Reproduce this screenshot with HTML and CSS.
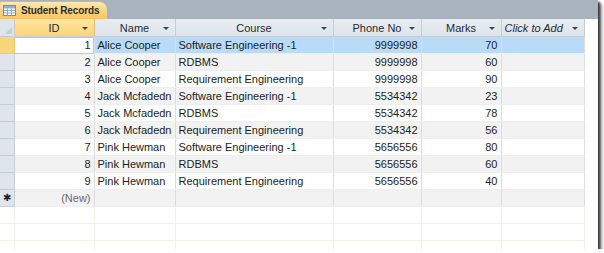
FILE: index.html
```html
<!DOCTYPE html>
<html lang="en">
<head>
    <meta charset="UTF-8">
    <title>Student Records</title>
    <link rel="stylesheet" href="styles.css">
</head>
<body>

<div class="window">
    <!-- Object tab -->
    <div class="tabbar">
        <div class="tab">
            <svg class="tab-icon" width="13" height="11" viewBox="0 0 13 11">
                <rect x="0.5" y="0.5" width="12" height="10" fill="#ffffff" stroke="#6d8fb8"/>
                <rect x="1" y="1" width="11" height="2.5" fill="#8fb0d8"/>
                <path d="M1 5.5H12M1 8H12M4.5 3.5V10.5M8.5 3.5V10.5" stroke="#8fa9c9" stroke-width="1"/>
            </svg>
            <span>Student Records</span>
        </div>
    </div>

    <!-- Datasheet -->
    <div class="sheet">
        <table class="grid">
            <colgroup>
                <col class="c-sel">
                <col class="c-id">
                <col class="c-name">
                <col class="c-course">
                <col class="c-phone">
                <col class="c-marks">
                <col class="c-add">
                <col class="c-rest">
            </colgroup>
            <thead>
                <tr>
                    <th class="corner"><span class="corner-mark"></span></th>
                    <th class="head head-active">ID<i class="arrow"></i></th>
                    <th class="head">Name<i class="arrow"></i></th>
                    <th class="head">Course<i class="arrow"></i></th>
                    <th class="head">Phone No<i class="arrow"></i></th>
                    <th class="head">Marks<i class="arrow"></i></th>
                    <th class="head head-add">Click to Add<i class="arrow"></i></th>
                    <th class="rest"></th>
                </tr>
            </thead>
            <tbody>
                <tr class="row current">
                    <td class="sel sel-active"></td>
                    <td class="num cell-focus">1</td>
                    <td>Alice Cooper</td>
                    <td>Software Engineering -1</td>
                    <td class="num">9999998</td>
                    <td class="num">70</td>
                    <td></td>
                    <td class="rest"></td>
                </tr>
                <tr class="row alt">
                    <td class="sel"></td>
                    <td class="num">2</td>
                    <td>Alice Cooper</td>
                    <td>RDBMS</td>
                    <td class="num">9999998</td>
                    <td class="num">60</td>
                    <td></td>
                    <td class="rest"></td>
                </tr>
                <tr class="row">
                    <td class="sel"></td>
                    <td class="num">3</td>
                    <td>Alice Cooper</td>
                    <td>Requirement Engineering</td>
                    <td class="num">9999998</td>
                    <td class="num">90</td>
                    <td></td>
                    <td class="rest"></td>
                </tr>
                <tr class="row alt">
                    <td class="sel"></td>
                    <td class="num">4</td>
                    <td>Jack Mcfadedn</td>
                    <td>Software Engineering -1</td>
                    <td class="num">5534342</td>
                    <td class="num">23</td>
                    <td></td>
                    <td class="rest"></td>
                </tr>
                <tr class="row">
                    <td class="sel"></td>
                    <td class="num">5</td>
                    <td>Jack Mcfadedn</td>
                    <td>RDBMS</td>
                    <td class="num">5534342</td>
                    <td class="num">78</td>
                    <td></td>
                    <td class="rest"></td>
                </tr>
                <tr class="row alt">
                    <td class="sel"></td>
                    <td class="num">6</td>
                    <td>Jack Mcfadedn</td>
                    <td>Requirement Engineering</td>
                    <td class="num">5534342</td>
                    <td class="num">56</td>
                    <td></td>
                    <td class="rest"></td>
                </tr>
                <tr class="row">
                    <td class="sel"></td>
                    <td class="num">7</td>
                    <td>Pink Hewman</td>
                    <td>Software Engineering -1</td>
                    <td class="num">5656556</td>
                    <td class="num">80</td>
                    <td></td>
                    <td class="rest"></td>
                </tr>
                <tr class="row alt">
                    <td class="sel"></td>
                    <td class="num">8</td>
                    <td>Pink Hewman</td>
                    <td>RDBMS</td>
                    <td class="num">5656556</td>
                    <td class="num">60</td>
                    <td></td>
                    <td class="rest"></td>
                </tr>
                <tr class="row">
                    <td class="sel"></td>
                    <td class="num">9</td>
                    <td>Pink Hewman</td>
                    <td>Requirement Engineering</td>
                    <td class="num">5656556</td>
                    <td class="num">40</td>
                    <td></td>
                    <td class="rest"></td>
                </tr>
                <tr class="row alt new">
                    <td class="sel sel-new">&#x2731;</td>
                    <td class="num muted">(New)</td>
                    <td></td>
                    <td></td>
                    <td></td>
                    <td></td>
                    <td></td>
                    <td class="rest"></td>
                </tr>
                <!-- empty area below the records -->
                <tr class="row blank">
                    <td class="sel"></td><td></td><td></td><td></td><td></td><td></td><td></td><td class="rest"></td>
                </tr>
                <tr class="row blank">
                    <td class="sel"></td><td></td><td></td><td></td><td></td><td></td><td></td><td class="rest"></td>
                </tr>
                <tr class="row blank">
                    <td class="sel"></td><td></td><td></td><td></td><td></td><td></td><td></td><td class="rest"></td>
                </tr>
            </tbody>
        </table>
    </div>
</div>

</body>
</html>
```

FILE: styles.css
```css
/* Page reset */
body {
    margin: 0;
    padding: 0;
    background: #ffffff;
    font-family: "Liberation Sans", Arial, sans-serif;
    font-size: 11px;
    color: #1c1c1c;
}

/* Screenshot frame with a drop shadow */
.window {
    width: 598px;
    height: 249px;
    overflow: hidden;
    background: #ffffff;
    box-shadow: 2px 2px 2px #3a3a3a, 4px 4px 3px #9a9a9a;
}

/* Object tab strip */
.tabbar {
    height: 19px;
    background: #a9b3bd;
    display: flex;
    align-items: flex-end;
}

.tab {
    height: 18px;
    display: flex;
    align-items: center;
    gap: 5px;
    padding: 0 7px 0 3px;
    box-sizing: border-box;
    background: linear-gradient(#fde9b0, #fbd27c 55%, #f8c565);
    border-top: 1px solid #e9b456;
    border-radius: 2px 8px 0 0;
    font-size: 10px;
    font-weight: bold;
    white-space: nowrap;
    color: #2c2c2c;
    letter-spacing: -0.1px;
}

.tab-icon {
    flex: none;
}

/* Datasheet grid */
.grid {
    border-collapse: collapse;
    table-layout: fixed;
    width: 598px;
}

.c-sel { width: 14px; }
.c-id { width: 80px; }
.c-name { width: 81px; }
.c-course { width: 158px; }
.c-phone { width: 88px; }
.c-marks { width: 80px; }
.c-add { width: 83px; }
.c-rest { width: 14px; }

th,
td {
    padding: 0 3px;
    white-space: nowrap;
    overflow: hidden;
}

/* Column headers */
.head {
    position: relative;
    height: 17px;
    font-weight: normal;
    text-align: center;
    color: #1e2a38;
    background: linear-gradient(#e8ecf1, #dfe5ec);
    border-right: 1px solid #c5cdd7;
    border-bottom: 1px solid #c5cdd7;
}

.head-active {
    background: linear-gradient(#fde59e, #fbd478);
    border-right-color: #e6be6b;
}

.head-add {
    text-align: left;
    font-style: italic;
}

.arrow {
    position: absolute;
    right: 6px;
    top: 8px;
    width: 0;
    height: 0;
    border-left: 3px solid transparent;
    border-right: 3px solid transparent;
    border-top: 3px solid #3b4450;
}

.corner {
    position: relative;
    background: #dfe5ec;
    border-right: 1px solid #c5cdd7;
    border-bottom: 1px solid #c5cdd7;
}

.corner-mark {
    position: absolute;
    right: 2px;
    bottom: 2px;
    width: 0;
    height: 0;
    border-left: 7px solid transparent;
    border-bottom: 7px solid #c6ced8;
}

.rest {
    background: #ffffff;
    border: none;
}

/* Record rows */
.row td {
    height: 16px;
    line-height: 16px;
    border-right: 1px solid #dcdcdc;
    border-bottom: 1px solid #eeeeee;
}

.row td.rest {
    border-right: none;
    border-bottom: none;
    background: #ffffff;
}

.alt td {
    background: #f2f2f2;
}

.current td {
    background: #b9dbf7;
}

.num {
    text-align: right;
}

.muted {
    color: #6a6a6a;
}

.row .cell-focus {
    background: #ffffff;
    outline: 1px solid #f4c45a;
    outline-offset: -1px;
}

/* Record selectors */
.row .sel {
    padding: 0;
    background: #dfe5ec;
    border-right: 1px solid #c5cdd7;
    border-bottom: 1px solid #c5cdd7;
    text-align: center;
    font-size: 10px;
    color: #222222;
}

.row .sel-active {
    background: #fbd57c;
}

.blank td,
.row.blank .sel {
    background: #ffffff;
    border-right: 1px solid #f3f1e6;
    border-bottom: 1px solid #f3f1e6;
}
```
